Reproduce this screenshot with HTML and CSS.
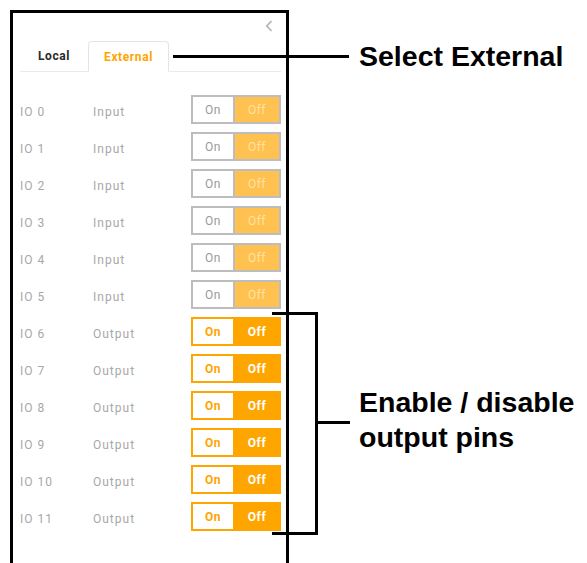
FILE: index.html
```html
<!DOCTYPE html>
<html lang="en">
<head>
    <meta charset="UTF-8" />
    <title>IO pins - External</title>
    <link rel="stylesheet" href="styles.css">
</head>
<body>

<div class="panel">
    <div class="panel-head">
        <svg class="collapse" width="8" height="12" viewBox="0 0 8 12">
            <path d="M6.5 1 L1.8 6 L6.5 11" fill="none" stroke="#b5b5b5" stroke-width="1.8" />
        </svg>
    </div>

    <div class="tabs">
        <div class="tab">Local</div>
        <div class="tab active">External</div>
    </div>

    <div class="pins">
        <div class="pin"><span class="pin-id">IO 0</span><span class="pin-type">Input</span>
            <div class="toggle disabled"><span class="on">On</span><span class="off">Off</span></div></div>
        <div class="pin"><span class="pin-id">IO 1</span><span class="pin-type">Input</span>
            <div class="toggle disabled"><span class="on">On</span><span class="off">Off</span></div></div>
        <div class="pin"><span class="pin-id">IO 2</span><span class="pin-type">Input</span>
            <div class="toggle disabled"><span class="on">On</span><span class="off">Off</span></div></div>
        <div class="pin"><span class="pin-id">IO 3</span><span class="pin-type">Input</span>
            <div class="toggle disabled"><span class="on">On</span><span class="off">Off</span></div></div>
        <div class="pin"><span class="pin-id">IO 4</span><span class="pin-type">Input</span>
            <div class="toggle disabled"><span class="on">On</span><span class="off">Off</span></div></div>
        <div class="pin"><span class="pin-id">IO 5</span><span class="pin-type">Input</span>
            <div class="toggle disabled"><span class="on">On</span><span class="off">Off</span></div></div>
        <div class="pin"><span class="pin-id">IO 6</span><span class="pin-type">Output</span>
            <div class="toggle"><span class="on">On</span><span class="off">Off</span></div></div>
        <div class="pin"><span class="pin-id">IO 7</span><span class="pin-type">Output</span>
            <div class="toggle"><span class="on">On</span><span class="off">Off</span></div></div>
        <div class="pin"><span class="pin-id">IO 8</span><span class="pin-type">Output</span>
            <div class="toggle"><span class="on">On</span><span class="off">Off</span></div></div>
        <div class="pin"><span class="pin-id">IO 9</span><span class="pin-type">Output</span>
            <div class="toggle"><span class="on">On</span><span class="off">Off</span></div></div>
        <div class="pin"><span class="pin-id">IO 10</span><span class="pin-type">Output</span>
            <div class="toggle"><span class="on">On</span><span class="off">Off</span></div></div>
        <div class="pin"><span class="pin-id">IO 11</span><span class="pin-type">Output</span>
            <div class="toggle"><span class="on">On</span><span class="off">Off</span></div></div>
    </div>
</div>

<!-- Callouts -->
<div class="callout-line tab-line"></div>
<div class="callout-text tab-note">Select External</div>

<div class="bracket"></div>
<div class="callout-line bracket-line"></div>
<div class="callout-text pins-note">Enable / disable<br>output pins</div>

</body>
</html>
```

FILE: styles.css
```css
html, body {
    margin: 0;
    height: 100%;
    overflow: hidden;
    background: #fff;
}

body {
    font-family: Roboto, "Noto Sans", sans-serif;
    color: #333;
}

.panel {
    margin: 10px 0 0 10px;
    width: 261px;
    height: 550px;
    border: 3px solid #000;
    border-bottom: none;
    padding: 0 5px 0 7px;
}

.panel-head {
    height: 28px;
    display: flex;
    justify-content: flex-end;
    align-items: center;
}

.collapse {
    margin: 0 8px 2px 0;
}

.tabs {
    display: flex;
    height: 30px;
    border-bottom: 1px solid #ebebeb;
}

.tab {
    width: 68px;
    display: flex;
    justify-content: center;
    align-items: center;
    font-size: 12px;
    font-weight: bold;
    letter-spacing: 0.6px;
    color: #2b2b2b;
}

.tab.active {
    width: 79px;
    color: #ffa500;
    border: 1px solid #e4e4e4;
    border-bottom: 1px solid #fff;
    border-radius: 4px 4px 0 0;
    margin-bottom: -1px;
    background: #fff;
}

.pins {
    margin-top: 23px;
    display: flex;
    flex-direction: column;
    gap: 8px;
}

.pin {
    display: flex;
    align-items: center;
    height: 29px;
    font-size: 12px;
    letter-spacing: 1px;
    color: #a8a8a8;
}

.pin-id {
    width: 73px;
    padding-top: 5px;
}

.pin-type {
    padding-top: 5px;
}

.toggle {
    margin-left: auto;
    display: flex;
    height: 25px;
    border: 2px solid #ffa500;
    background: #ffa500;
    gap: 2px;
    font-size: 12px;
    font-weight: bold;
    letter-spacing: 0.5px;
}

.toggle span {
    display: flex;
    justify-content: center;
    align-items: center;
    padding-top: 1px;
}

.toggle .on {
    width: 40px;
    background: #fff;
    color: #ffa500;
}

.toggle .off {
    width: 44px;
    color: #fff;
}

.toggle.disabled {
    border-color: #bdbdbd;
    background: #bdbdbd;
    font-weight: normal;
}

.toggle.disabled .on {
    color: #9a9a9a;
}

.toggle.disabled .off {
    background: #ffc14f;
    color: #ffe2a6;
}

/* annotation layer */
.callout-line {
    position: absolute;
    height: 3px;
    background: #000;
}

.tab-line {
    left: 173px;
    top: 55px;
    width: 176px;
}

.callout-text {
    position: absolute;
    left: 359px;
    font-family: "Liberation Sans", Arial, sans-serif;
    font-weight: bold;
    font-size: 28.5px;
    line-height: 34.5px;
    color: #000;
}

.tab-note {
    top: 39px;
}

.bracket {
    position: absolute;
    left: 272px;
    top: 312px;
    width: 43px;
    height: 217px;
    border: 3px solid #000;
    border-left: none;
}

.bracket-line {
    left: 318px;
    top: 421px;
    width: 32px;
}

.pins-note {
    top: 385px;
}
```
